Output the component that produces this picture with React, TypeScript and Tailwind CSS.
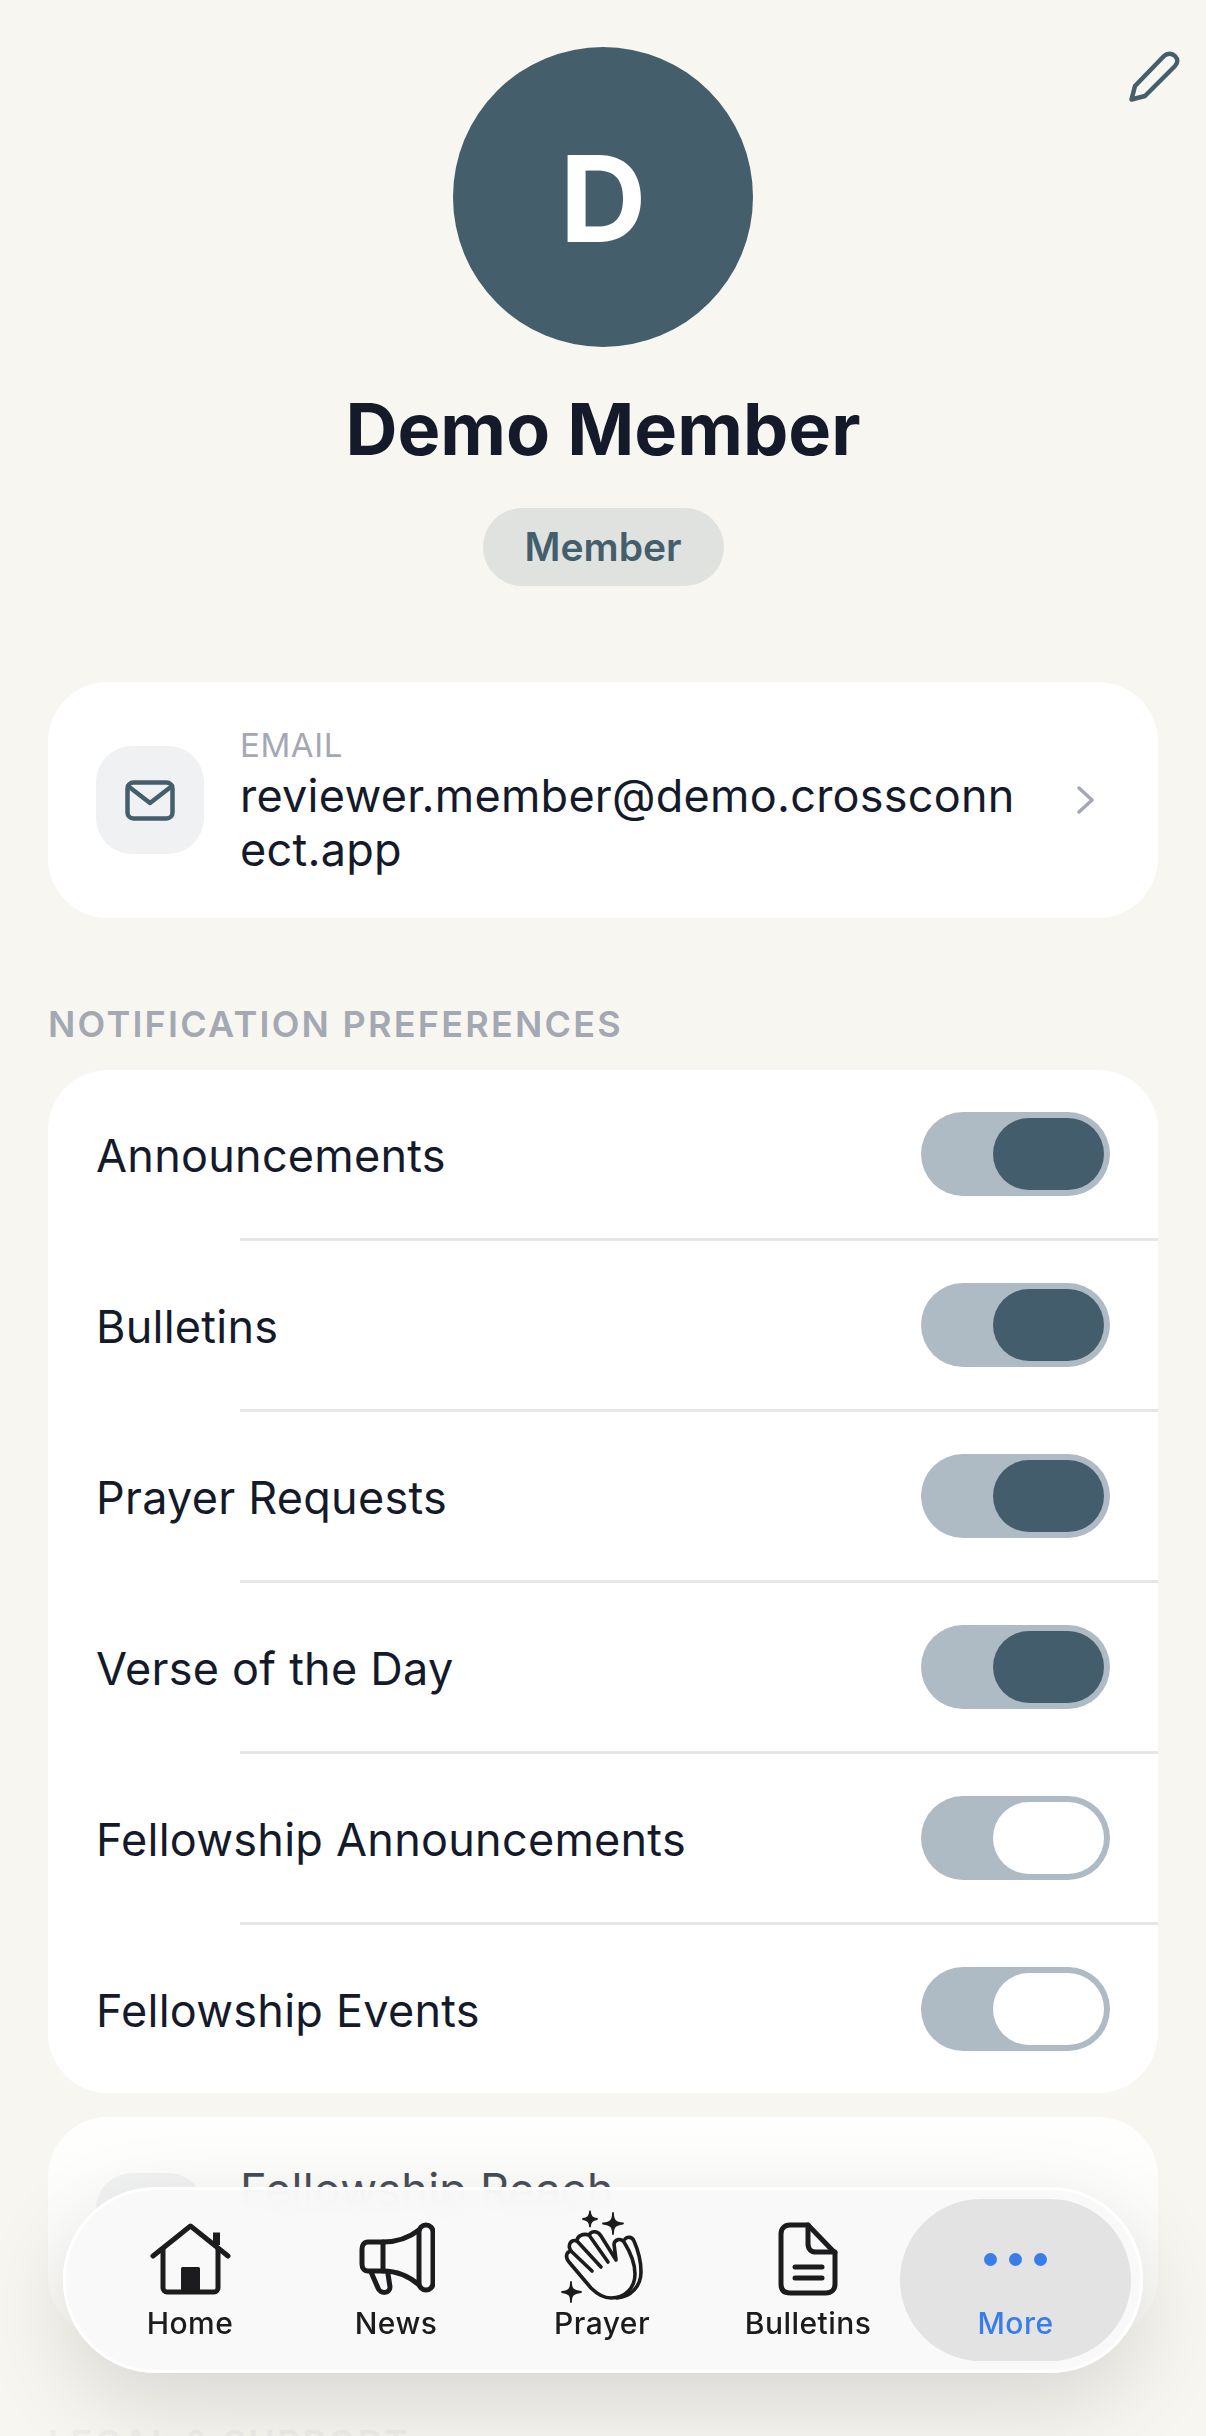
const text = "font-['Inter',sans-serif]";

function Toggle({ on }: { on: boolean }) {
  return (
    <div className="flex h-[84px] w-[189px] items-center justify-end rounded-full bg-[#aebbc4] pr-[6px]">
      <div className={on ? "h-[72px] w-[111px] rounded-full bg-[#445d6c]" : "h-[72px] w-[111px] rounded-full bg-white"} />
    </div>
  );
}

const prefs = [
  { label: "Announcements", on: true },
  { label: "Bulletins", on: true },
  { label: "Prayer Requests", on: true },
  { label: "Verse of the Day", on: true },
  { label: "Fellowship Announcements", on: false },
  { label: "Fellowship Events", on: false },
];

function HomeIcon() {
  return (
    <svg width="81" height="72" viewBox="0 0 81 72" fill="none" stroke="#1c1c1e" strokeWidth="5" strokeLinecap="round" strokeLinejoin="round">
      <path d="M3 33 L40.5 3 L78 33" />
      <path d="M13 26 V65 a4 4 0 0 0 4 4 H64 a4 4 0 0 0 4 -4 V26" />
      <path d="M66.5 22 V9.5" strokeWidth="7" strokeLinecap="butt" />
      <rect x="31" y="44" width="19" height="25" rx="1.5" fill="#1c1c1e" stroke="none" />
    </svg>
  );
}

function NewsIcon() {
  return (
    <svg width="78" height="74" viewBox="0 0 78 74" fill="none" stroke="#1c1c1e" strokeWidth="5" strokeLinecap="round" strokeLinejoin="round">
      <path d="M62 8 C53 15 41 20 26 20 H11 C7 20 5 23 5 27 V42 C5 46 7 49 11 49 H26 C41 49 53 55 62 63" />
      <rect x="62" y="3" width="14" height="65" rx="7" />
      <path d="M26 20 V49" />
      <path d="M14 50 L21 66 C23 72 33 72 33 65 L31 52" />
    </svg>
  );
}

function PrayerIcon() {
  return (
    <svg width="72" height="72" viewBox="47 33 72 72" className="overflow-visible" fill="none" stroke="#1c1c1e" strokeWidth="3.6" strokeLinecap="round" strokeLinejoin="round">
      <path d="M97 70 L82 46 C79 41 73 40 70 45 C64 43 58 46 58 51 C52 49 48 55 52 61 C47 62 46 67 50 72 L72 98 C78 104 84 108 92 108 C106 108 116 98 116 84 C116 72 110 60 105 52 C102 48 96 49 95 54 Z" />
      <path d="M70 45 L89 72" />
      <path d="M58 51 L82 77" />
      <path d="M52 61 L73 81" />
      <path d="M106 49 C109 46 113 47 115 51 C119 60 122 70 122 82 C122 96 112 107 98 108" />
      <path d="M71 21.5 C71 26 73 28.5 78 29 C73 29.5 71 32 71 36.5 C71 32 69 29.5 64 29 C69 28.5 71 26 71 21.5Z" fill="#1c1c1e" strokeWidth="1.8" />
      <path d="M94 23 C94 30 96 32.5 104 33.5 C96 34.5 94 37 94 44 C94 37 92 34.5 84 33.5 C92 32.5 94 30 94 23Z" fill="#1c1c1e" strokeWidth="1.8" />
      <path d="M52 92 C52 99 54 101 62 102 C54 103 52 105 52 112 C52 105 50 103 43 102 C50 101 52 99 52 92Z" fill="#1c1c1e" strokeWidth="1.8" />
    </svg>
  );
}

function BulletinIcon() {
  return (
    <svg width="60" height="74" viewBox="0 0 60 74" fill="none" stroke="#1c1c1e" strokeWidth="5" strokeLinecap="round" strokeLinejoin="round">
      <path d="M12 3 H30 L57 31 V62 C57 68 53 71 48 71 H12 C6 71 3 68 3 62 V12 C3 7 6 3 12 3Z" />
      <path d="M30 3 V22 C30 27 33 30 38 30 H57" />
      <path d="M17 45 H44" />
      <path d="M17 56 H44" />
    </svg>
  );
}

const navItems = [
  { label: "Home", icon: <HomeIcon /> },
  { label: "News", icon: <NewsIcon /> },
  { label: "Prayer", icon: <PrayerIcon /> },
  { label: "Bulletins", icon: <BulletinIcon /> },
];

export default function App() {
  return (
    <div className={`${text} relative h-[2436px] w-[1206px] overflow-hidden bg-[#f7f6f1]`}>
      {/* edit button */}
      <button className="absolute right-[21px] top-[47px] text-[#455e6c]">
        <svg width="60" height="60" viewBox="15 12 60 60" fill="none" stroke="currentColor" strokeWidth="4.5" strokeLinecap="round" strokeLinejoin="round">
          <path d="M21.5 64.5 L25 51 L54 21 C57 18 62 18 65 21 C68 24 68 28 65 31 L35 61 Z" />
        </svg>
      </button>

      <div className="flex flex-col px-[48px] pt-[47px]">
        <div className="flex flex-col items-center">
          <div className="flex h-[300px] w-[300px] items-center justify-center rounded-full bg-[#455e6c] pt-[4px] text-[120px] font-bold leading-none text-white">
            D
          </div>
          <h1 className="mt-[34px] text-[72px] font-bold leading-[96px] text-[#141a2a]">Demo Member</h1>
          <span className="mt-[31px] flex h-[78px] w-[241px] items-center justify-center rounded-full bg-[#dfe2df] text-[39px] font-semibold text-[#455e6c]">
            Member
          </span>
        </div>

        <div className="mt-[96px] flex h-[236px] items-center rounded-[60px] bg-white pl-[48px] pr-[62px]">
          <div className="flex h-[108px] w-[108px] shrink-0 items-center justify-center rounded-[36px] bg-[#f0f1f3]">
            <svg width="50" height="41" viewBox="0 0 50 41" fill="none" stroke="#455e6c" strokeWidth="4.5" strokeLinecap="round" strokeLinejoin="round">
              <rect x="2.5" y="2.5" width="45" height="36" rx="6" />
              <path d="M3 6 L25 23 L47 6" />
            </svg>
          </div>
          <div className="ml-[36px] w-[780px] shrink-0">
            <div className="mb-[3px] text-[33px] leading-[42px] tracking-[0.6px] text-[#a4a8b3]">EMAIL</div>
            <div className="break-all text-[45px] leading-[54px] tracking-[0.25px] text-[#141a2a]">reviewer.member@demo.crossconnect.app</div>
          </div>
          <svg className="ml-auto shrink-0" width="20" height="30" viewBox="0 0 20 30" fill="none" stroke="#a4a8b3" strokeWidth="3.5" strokeLinecap="round" strokeLinejoin="round">
            <path d="M3 3 L16 15 L3 27" />
          </svg>
        </div>

        <div className="mt-[84px] text-[36px] font-semibold leading-[44px] tracking-[2.25px] text-[#a4a8b3]">NOTIFICATION PREFERENCES</div>

        <div className="mt-[24px] overflow-hidden rounded-[60px] bg-white">
          {prefs.map((p, i) => (
            <div key={p.label} className="flex flex-col">
              <div className="flex h-[168px] items-center justify-between pl-[48px] pr-[48px]">
                <span className="pt-[4px] text-[45px] tracking-[0.25px] text-[#141a2a]">{p.label}</span>
                <Toggle on={p.on} />
              </div>
              {i < prefs.length - 1 && <div className="ml-[192px] h-[3px] bg-[#e6e6e6]" />}
            </div>
          ))}
        </div>

        <div className="mt-[24px] flex h-[220px] items-start rounded-[60px] bg-white pl-[48px] pt-[48px]">
          <div className="mt-[8px] h-[108px] w-[108px] rounded-[36px] bg-[#f0f1f3]" />
          <div className="ml-[36px] text-[45px] leading-[50px] tracking-[0.25px] text-[#141a2a]">Fellowship Reach</div>
        </div>

        <div className="mt-[84px] text-[36px] font-semibold leading-[44px] tracking-[2.25px] text-[#a4a8b3]">LEGAL &amp; SUPPORT</div>
      </div>

      {/* fade under the tab bar */}
      <div className="absolute inset-x-0 bottom-0 h-[346px] bg-gradient-to-b from-[#f7f6f1]/0 to-[#f7f6f1]/90" />

      <nav className="absolute bottom-[63px] left-[63px] flex h-[186px] w-[1080px] items-center justify-between rounded-full border-[3px] border-white bg-[#f9f9f9]/95 py-[9px] pl-[32px] pr-[9px] shadow-[0_30px_90px_rgba(0,0,0,0.13)] backdrop-blur-md">
        <div className="flex gap-[22px] pt-[4px]">
          {navItems.map((item) => (
            <div key={item.label} className="flex w-[184px] flex-col items-center">
              <div className="flex h-[72px] items-center justify-center">{item.icon}</div>
              <span className="mt-[10px] text-[30px] font-medium leading-[36px] tracking-[0.45px] text-[#1c1c1e]">{item.label}</span>
            </div>
          ))}
        </div>
        <div className="flex h-[162px] w-[231px] flex-col items-center rounded-[81px] bg-[#e3e3e4]">
          <div className="flex h-[96px] items-end justify-center gap-[11.5px] pb-[29px]">
            <span className="h-[13.5px] w-[13.5px] rounded-full bg-[#3b7de8]" />
            <span className="h-[13.5px] w-[13.5px] rounded-full bg-[#3b7de8]" />
            <span className="h-[13.5px] w-[13.5px] rounded-full bg-[#3b7de8]" />
          </div>
          <span className="mt-[10px] text-[30px] font-medium leading-[36px] tracking-[0.45px] text-[#3b7de8]">More</span>
        </div>
      </nav>
    </div>
  );
}
